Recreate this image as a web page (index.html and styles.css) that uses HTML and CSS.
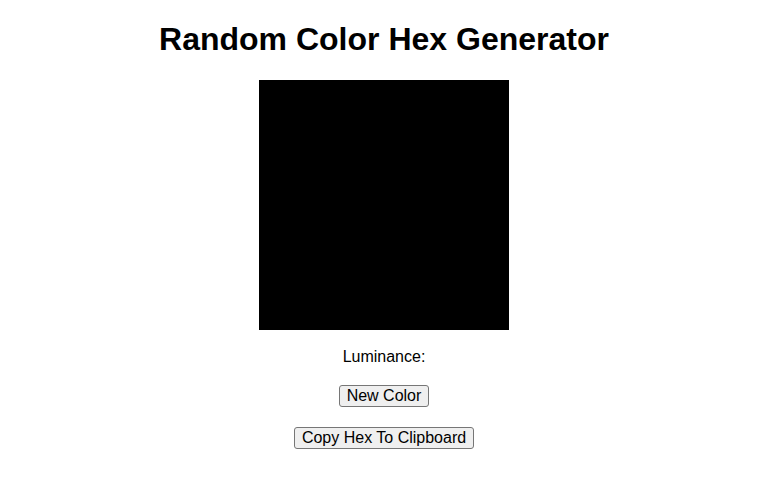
FILE: index.html
```html
<!DOCTYPE html>
<html lang="en">
<head>
<meta charset="utf-8">
<title>Random Color Hex Generator</title>
<link rel="stylesheet" href="styles.css">
</head>
<body>
<main class="app">
  <h1 class="title">Random Color Hex Generator</h1>
  <div class="swatch"></div>
  <p class="luminance">Luminance: </p>
  <div class="actions">
    <button class="btn" type="button">New Color</button>
    <button class="btn" type="button">Copy Hex To Clipboard</button>
  </div>
</main>
</body>
</html>
```
FILE: styles.css
```css
html, body {
  margin: 0;
  padding: 0;
  background: #ffffff;
}
body {
  font-family: "Liberation Sans", Arial, sans-serif;
  color: #000000;
  font-size: 16px;
}
.app {
  display: flex;
  flex-direction: column;
  align-items: center;
}
.title {
  font-size: 32px;
  font-weight: bold;
  margin: 20.5px 0 22.4px;
  line-height: normal;
}
.swatch {
  width: 250px;
  height: 250px;
  background: #000000;
}
.luminance {
  margin: 18px 0 19px;
  line-height: normal;
}
.actions {
  display: flex;
  flex-direction: column;
  align-items: center;
  gap: 20px;
}
.btn {
  font-family: "Liberation Sans", Arial, sans-serif;
  font-size: 16px;
  line-height: normal;
  color: #000000;
  background: #efefef;
  border: 1px solid #767676;
  border-radius: 3px;
  padding: 1px 7px;
  margin: 0;
}
```
